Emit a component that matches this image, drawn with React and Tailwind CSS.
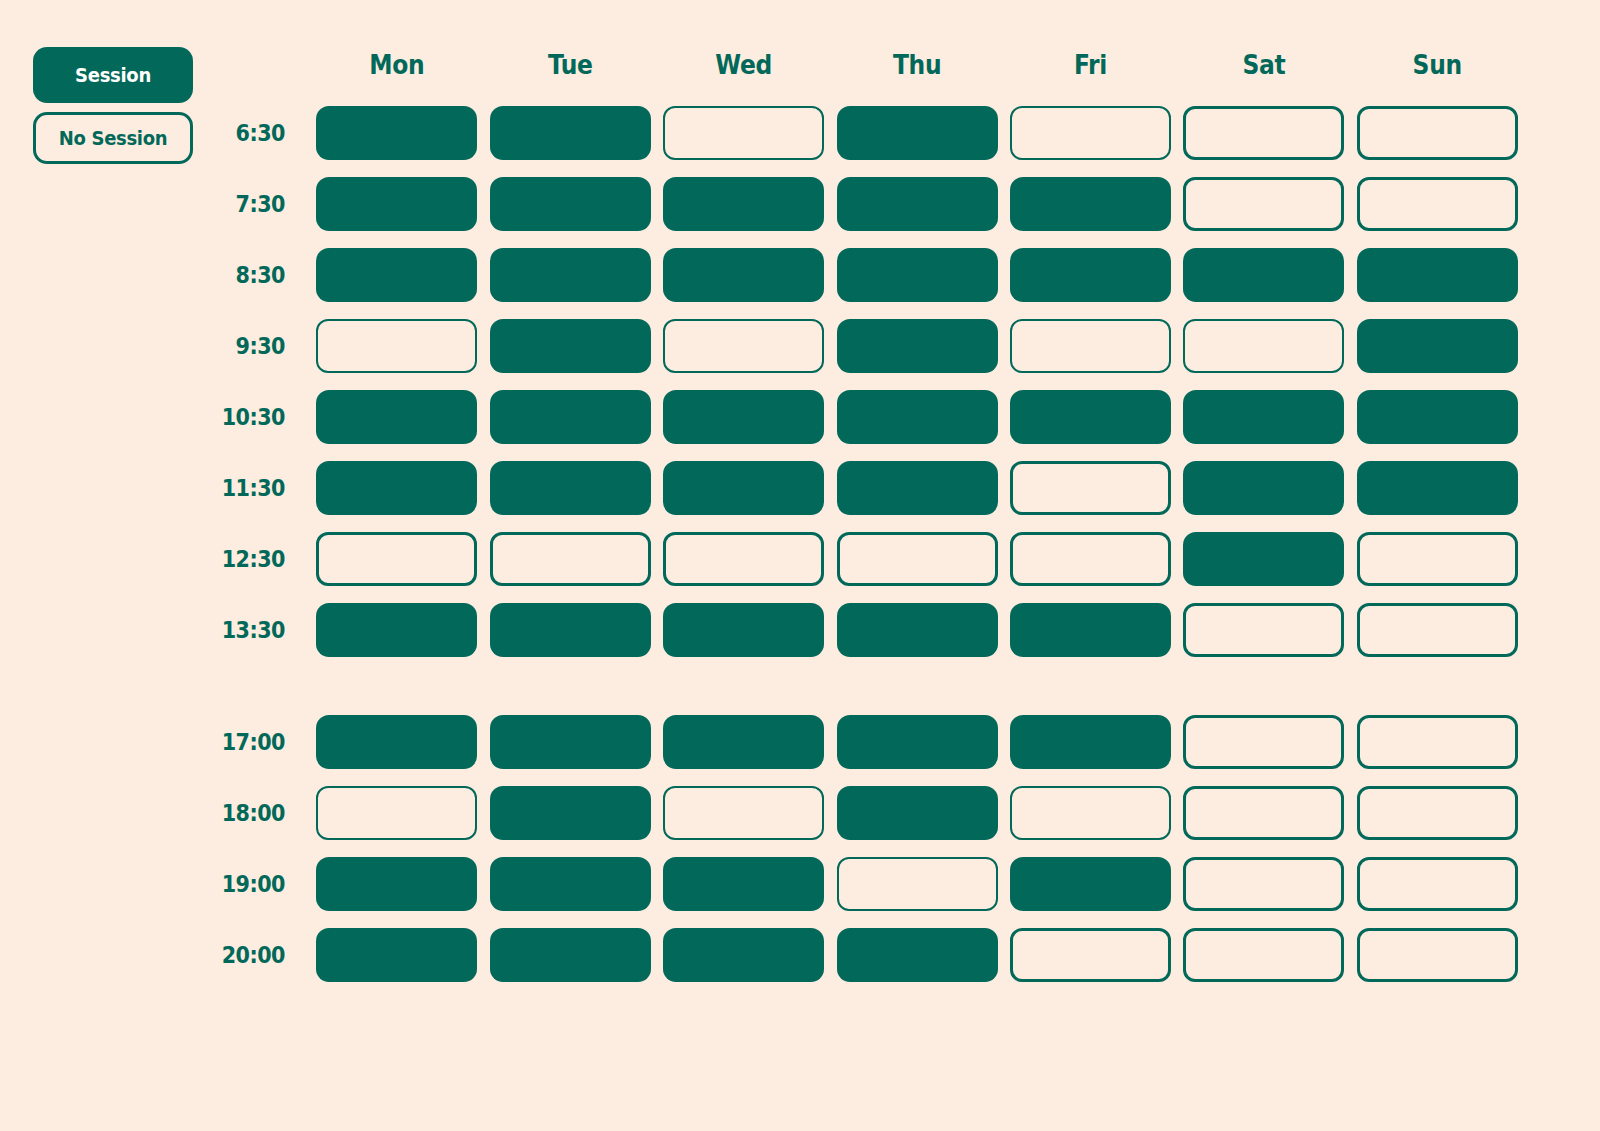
const days = ['Mon', 'Tue', 'Wed', 'Thu', 'Fri', 'Sat', 'Sun'];

// 1 = session, 0 = no session, 2 = no session (thin outline)
const morning = [
  { time: '6:30', slots: [1, 1, 2, 1, 2, 0, 0] },
  { time: '7:30', slots: [1, 1, 1, 1, 1, 0, 0] },
  { time: '8:30', slots: [1, 1, 1, 1, 1, 1, 1] },
  { time: '9:30', slots: [2, 1, 2, 1, 2, 2, 1] },
  { time: '10:30', slots: [1, 1, 1, 1, 1, 1, 1] },
  { time: '11:30', slots: [1, 1, 1, 1, 0, 1, 1] },
  { time: '12:30', slots: [0, 0, 0, 0, 0, 1, 0] },
  { time: '13:30', slots: [1, 1, 1, 1, 1, 0, 0] },
];

const evening = [
  { time: '17:00', slots: [1, 1, 1, 1, 1, 0, 0] },
  { time: '18:00', slots: [2, 1, 2, 1, 2, 0, 0] },
  { time: '19:00', slots: [1, 1, 1, 2, 1, 0, 0] },
  { time: '20:00', slots: [1, 1, 1, 1, 0, 0, 0] },
];

const font = { fontFamily: '"DejaVu Sans Condensed", Roboto, sans-serif' };

function Slot({ kind }) {
  if (kind === 1) return <div className="h-[54px] rounded-[13px] bg-[#02695a]" />;
  if (kind === 2) return <div className="h-[54px] rounded-[12px] border-2 border-[#02695a]" />;
  return <div className="h-[54px] rounded-[12px] border-[3px] border-[#02695a]" />;
}

function Row({ time, slots }) {
  return (
    <>
      <div className="flex h-[54px] items-center justify-end pr-[19px] text-[23px] font-bold tracking-[-0.5px] text-[#02695a]">
        {time}
      </div>
      {slots.map((s, i) => (
        <Slot key={i} kind={s} />
      ))}
    </>
  );
}

export default function App() {
  return (
    <div className="flex min-h-screen items-start bg-[#fdede0] pl-[33px] pt-[47px]" style={font}>
      <div className="flex w-[160px] flex-col gap-[9px]">
        <div className="flex h-[56px] items-center justify-center rounded-[14px] bg-[#02695a] text-[20px] font-bold tracking-[-0.3px] text-white">
          Session
        </div>
        <div className="flex h-[52px] items-center justify-center rounded-[14px] border-[3px] border-[#02695a] text-[20px] font-bold tracking-[-0.3px] text-[#02695a]">
          No Session
        </div>
      </div>

      <div className="grid grid-cols-[111px_repeat(7,161px)] gap-x-[12.4px] gap-y-[17px]">
        <div className="h-[42px]" />
        {days.map((d) => (
          <div key={d} className="flex h-[42px] items-center justify-center pb-[6px] text-[26px] font-bold tracking-[-0.3px] text-[#02695a]">
            {d}
          </div>
        ))}

        {morning.map((r) => (
          <Row key={r.time} {...r} />
        ))}

        <div className="col-span-8 h-[24px]" />

        {evening.map((r) => (
          <Row key={r.time} {...r} />
        ))}
      </div>
    </div>
  );
}
